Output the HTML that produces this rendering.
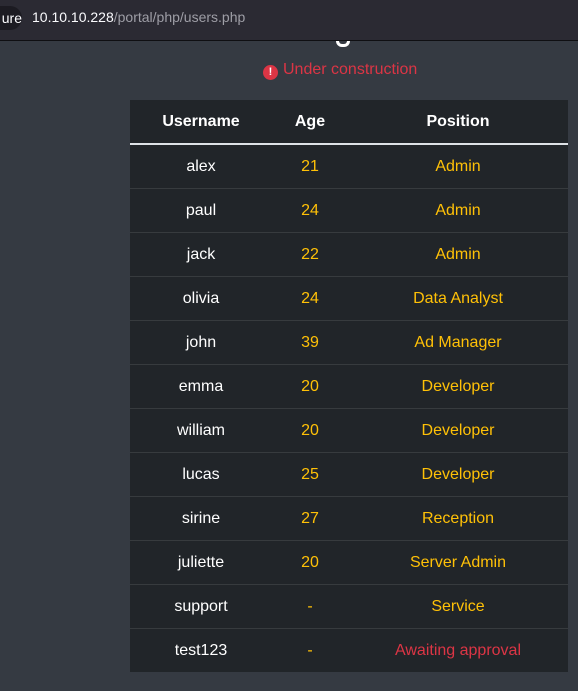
<!DOCTYPE html>
<html><head><style>
body{margin:0;width:578px;height:691px;overflow:hidden;background:#353a42;font-family:"Liberation Sans",sans-serif;position:relative}
.top{position:absolute;left:0;top:0;width:578px;height:40px;background:#2b2a33;border-bottom:1px solid #0f0f12}
.pill{position:absolute;left:-20px;top:6px;width:42px;height:24px;border-radius:12px;background:#1c1b22;color:#fbfbfe;font-size:14px;line-height:24px;text-align:right}
.url{position:absolute;left:32px;top:9px;font-size:14px;color:#fbfbfe}
.url span{color:#9e9ea6}
.warn{position:absolute;left:263px;top:61px;color:#dc3545;font-size:16px}
.warn b{display:inline-block;width:15px;height:15px;border-radius:50%;background:#dc3545;color:#fff;font-size:11px;text-align:center;line-height:15px;margin-right:5px;vertical-align:-1px}
.t{position:absolute;left:130px;top:100px;width:438px;background:#212529;font-size:16px}
.row{display:flex;height:44px;box-sizing:border-box;border-top:1px solid #373b3e;align-items:center}
.row.h{height:43px;border-top:none;font-weight:bold;color:#fff}
.row.first{border-top:2px solid #dee2e6;height:45px}
.row div{text-align:center}
.a{width:142px;color:#fff}.b{width:76px;color:#ffc107}.c{flex:1;color:#ffc107}
.h .b,.h .c{color:#fff}
.r{color:#dc3545!important}
</style></head><body>
<div class="top"><div class="pill">ure</div><div class="url">10.10.10.228<span>/portal/php/users.php</span></div></div>
<div style="position:absolute;left:336px;top:41px;width:14px;height:6px;border:3px solid #fff;border-top:none;border-radius:0 0 8px 8px;box-sizing:border-box"></div>
<div class="warn"><b>!</b>Under construction</div>
<div class="t">
<div class="row h"><div class="a">Username</div><div class="b">Age</div><div class="c">Position</div></div>
<div class="row first"><div class="a">alex</div><div class="b">21</div><div class="c">Admin</div></div>
<div class="row"><div class="a">paul</div><div class="b">24</div><div class="c">Admin</div></div>
<div class="row"><div class="a">jack</div><div class="b">22</div><div class="c">Admin</div></div>
<div class="row"><div class="a">olivia</div><div class="b">24</div><div class="c">Data Analyst</div></div>
<div class="row"><div class="a">john</div><div class="b">39</div><div class="c">Ad Manager</div></div>
<div class="row"><div class="a">emma</div><div class="b">20</div><div class="c">Developer</div></div>
<div class="row"><div class="a">william</div><div class="b">20</div><div class="c">Developer</div></div>
<div class="row"><div class="a">lucas</div><div class="b">25</div><div class="c">Developer</div></div>
<div class="row"><div class="a">sirine</div><div class="b">27</div><div class="c">Reception</div></div>
<div class="row"><div class="a">juliette</div><div class="b">20</div><div class="c">Server Admin</div></div>
<div class="row"><div class="a">support</div><div class="b">-</div><div class="c">Service</div></div>
<div class="row"><div class="a">test123</div><div class="b">-</div><div class="c r">Awaiting approval</div></div>
</div>
</body></html>
